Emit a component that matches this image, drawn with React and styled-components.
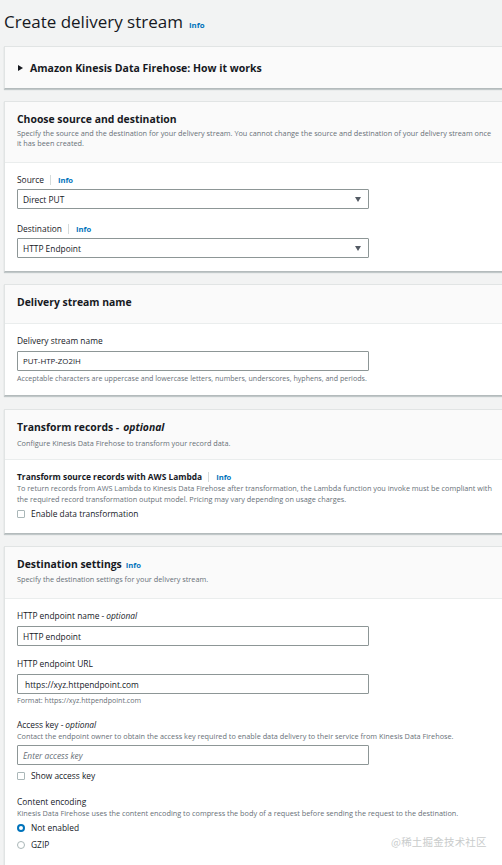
import React from "react";
import styled, { createGlobalStyle } from "styled-components";

const Global = createGlobalStyle`
  html, body { margin: 0; padding: 0; background: #f2f3f3; }
  body { font-family: "Open Sans", "Noto Sans", sans-serif; color: #16191f; overflow: hidden; }
  #root { width: 502px; overflow: hidden; }
  * { box-sizing: border-box; }
`;

const Page = styled.div`
  position: relative;
  width: 505px;
  padding: 10px 0 0 4px;
  display: flex;
  flex-direction: column;
  gap: 12px;
  min-height: 865px;
`;

const TitleRow = styled.div`
  display: flex;
  align-items: baseline;
  gap: 6px;
  height: 24px;
`;

const PageTitle = styled.h1`
  margin: 0;
  font-size: 17px;
  font-weight: 400;
  line-height: 24px;
  color: #16191f;
`;

const Info = styled.span`
  font-size: ${(p) => p.$fs || "7.6px"};
  font-weight: 700;
  color: #0073bb;
`;

const Panel = styled.section`
  background: #fff;
  border-left: 1px solid #e1e4e4;
  border-top: 1px solid #e1e4e4;
  border-bottom: 1px solid #b4bbbc;
  box-shadow: 0 1px 1px 0 rgba(0, 28, 36, 0.2);
  margin-top: ${(p) => p.$mt || "0"};
`;

const Collapsed = styled.div`
  background: #fafafa;
  height: 41px;
  display: flex;
  align-items: center;
  padding-left: 13px;
  gap: 7px;
  font-size: 10.5px;
  font-weight: 700;
  color: #16191f;
`;

const Caret = styled.span`
  width: 0;
  height: 0;
  border-top: 3.5px solid transparent;
  border-bottom: 3.5px solid transparent;
  border-left: 5px solid #16191f;
`;

const Header = styled.div`
  background: #fafafa;
  border-bottom: 1px solid #eaeded;
  padding: ${(p) => p.$pad || "9px 12px 14px 12px"};
`;

const HTitle = styled.h2`
  margin: 0;
  font-size: 10.4px;
  font-weight: 700;
  line-height: 16px;
  color: #16191f;
  display: flex;
  align-items: baseline;
  gap: 4px;
  em { font-weight: 700; font-style: italic; }
`;

const Desc = styled.p`
  margin: ${(p) => p.$m || "0"};
  font-size: 7.3px;
  line-height: ${(p) => p.$lh || "10px"};
  color: #687078;
`;

const Body = styled.div`
  padding: ${(p) => p.$pad || "11px 12px 12px 12px"};
  display: flex;
  flex-direction: column;
`;

const Field = styled.div`
  display: flex;
  flex-direction: column;
  margin-bottom: ${(p) => p.$mb || "0"};
`;

const Label = styled.div`
  display: flex;
  align-items: center;
  font-size: 8.4px;
  line-height: 12px;
  height: 12px;
  color: #16191f;
  font-weight: ${(p) => (p.$bold ? 700 : 400)};
  margin-bottom: ${(p) => p.$mb || "3px"};
  em { font-style: italic; margin-left: 2px; }
`;

const Sep = styled.span`
  display: inline-block;
  width: 1px;
  height: 10px;
  background: #d5dbdb;
  margin: 0 7px 0 6px;
`;

const Box = styled.div`
  width: 352px;
  height: 20px;
  border: 1px solid #8d9696;
  border-radius: 1px;
  background: #fff;
  display: flex;
  align-items: center;
  justify-content: space-between;
  padding: 0 ${(p) => (p.$select ? "7px" : "0")} 0 ${(p) => p.$pl || "5px"};
  font-size: ${(p) => p.$fs || "8.4px"};
  color: ${(p) => (p.$ph ? "#687078" : "#16191f")};
  font-style: ${(p) => (p.$ph ? "italic" : "normal")};
`;

const SelectArrow = styled.span`
  width: 0;
  height: 0;
  border-left: 3.5px solid transparent;
  border-right: 3.5px solid transparent;
  border-top: 5px solid #545b64;
`;

const Hint = styled.div`
  font-size: 7.1px;
  line-height: 10px;
  color: #687078;
  margin-top: ${(p) => p.$mt || "2px"};
`;

const CheckRow = styled.label`
  display: flex;
  align-items: center;
  gap: 6px;
  font-size: 8.4px;
  line-height: 12px;
  height: 12px;
  color: #16191f;
  margin: ${(p) => p.$m || "0"};
`;

const Check = styled.span`
  width: 8px;
  height: 8px;
  border: 1px solid #aab7b8;
  border-radius: 1px;
  background: #fff;
`;

const Radio = styled.span`
  width: 8px;
  height: 8px;
  border-radius: 50%;
  background: #fff;
  border: ${(p) => (p.$on ? "2.5px solid #0073bb" : "1px solid #aab7b8")};
`;

const Watermark = styled.div`
  position: absolute;
  left: 391px;
  top: 834px;
  font-family: "Noto Sans CJK SC", sans-serif;
  font-size: 10.5px;
  color: #c9cccc;
  letter-spacing: 0.2px;
  white-space: nowrap;
`;

function Select({ value }) {
  return (
    <Box $select>
      <span>{value}</span>
      <SelectArrow />
    </Box>
  );
}

export default function App() {
  return (
    <>
      <Global />
      <Page>
        <TitleRow>
          <PageTitle>Create delivery stream</PageTitle>
          <Info $fs="7.8px">Info</Info>
        </TitleRow>

        <Panel>
          <Collapsed>
            <Caret />
            Amazon Kinesis Data Firehose: How it works
          </Collapsed>
        </Panel>

        <Panel>
          <Header $pad="9px 12px 14px 12px">
            <HTitle>Choose source and destination</HTitle>
            <Desc $m="1px 0 0">
              Specify the source and the destination for your delivery stream. You cannot change the source and destination of your delivery stream once it has been created.
            </Desc>
          </Header>
          <Body $pad="11px 12px 13px 12px">
            <Field $mb="14px">
              <Label>
                Source<Sep />
                <Info>Info</Info>
              </Label>
              <Select value="Direct PUT" />
            </Field>
            <Field>
              <Label>
                Destination<Sep />
                <Info>Info</Info>
              </Label>
              <Select value="HTTP Endpoint" />
            </Field>
          </Body>
        </Panel>

        <Panel>
          <Header $pad="9px 12px 13px 12px">
            <HTitle>Delivery stream name</HTitle>
          </Header>
          <Body $pad="11px 12px 12px 12px">
            <Field>
              <Label $mb="4px">Delivery stream name</Label>
              <Box $fs="7.9px">PUT-HTP-ZO2lH</Box>
              <Hint>Acceptable characters are uppercase and lowercase letters, numbers, underscores, hyphens, and periods.</Hint>
            </Field>
          </Body>
        </Panel>

        <Panel $mt="1px">
          <Header $pad="9px 12px 11px 12px">
            <HTitle>
              Transform records - <em>optional</em>
            </HTitle>
            <Desc $m="3px 0 0">Configure Kinesis Data Firehose to transform your record data.</Desc>
          </Header>
          <Body $pad="11px 12px 13px 12px">
            <Label $bold $mb="0">
              Transform source records with AWS Lambda<Sep />
              <Info>Info</Info>
            </Label>
            <Desc $lh="10.5px">
              To return records from AWS Lambda to Kinesis Data Firehose after transformation, the Lambda function you invoke must be compliant with the required record transformation output model. Pricing may vary depending on usage charges.
            </Desc>
            <CheckRow $m="4px 0 0">
              <Check />
              Enable data transformation
            </CheckRow>
          </Body>
        </Panel>

        <Panel>
          <Header $pad="9px 12px 14px 12px">
            <HTitle>
              Destination settings <Info>Info</Info>
            </HTitle>
            <Desc $m="1px 0 0">Specify the destination settings for your delivery stream.</Desc>
          </Header>
          <Body $pad="11px 12px 30px 12px">
            <Field $mb="12px">
              <Label $mb="4px">
                HTTP endpoint name -<em>optional</em>
              </Label>
              <Box>HTTP endpoint</Box>
            </Field>
            <Field $mb="14px">
              <Label $mb="4px">HTTP endpoint URL</Label>
              <Box $pl="7px">https://xyz.httpendpoint.com</Box>
              <Hint $mt="1px">Format: https://xyz.httpendpoint.com</Hint>
            </Field>
            <Field>
              <Label $mb="0">
                Access key -<em>optional</em>
              </Label>
              <Desc $m="0 0 4px">
                Contact the endpoint owner to obtain the access key required to enable data delivery to their service from Kinesis Data Firehose.
              </Desc>
              <Box $ph>Enter access key</Box>
            </Field>
            <CheckRow $m="5px 0 14px">
              <Check />
              Show access key
            </CheckRow>
            <Label $mb="0">Content encoding</Label>
            <Desc $m="0 0 4px">
              Kinesis Data Firehose uses the content encoding to compress the body of a request before sending the request to the destination.
            </Desc>
            <CheckRow $m="0 0 5px">
              <Radio $on />
              Not enabled
            </CheckRow>
            <CheckRow>
              <Radio />
              GZIP
            </CheckRow>
          </Body>
        </Panel>
        <Watermark>@稀土掘金技术社区</Watermark>
      </Page>
    </>
  );
}
